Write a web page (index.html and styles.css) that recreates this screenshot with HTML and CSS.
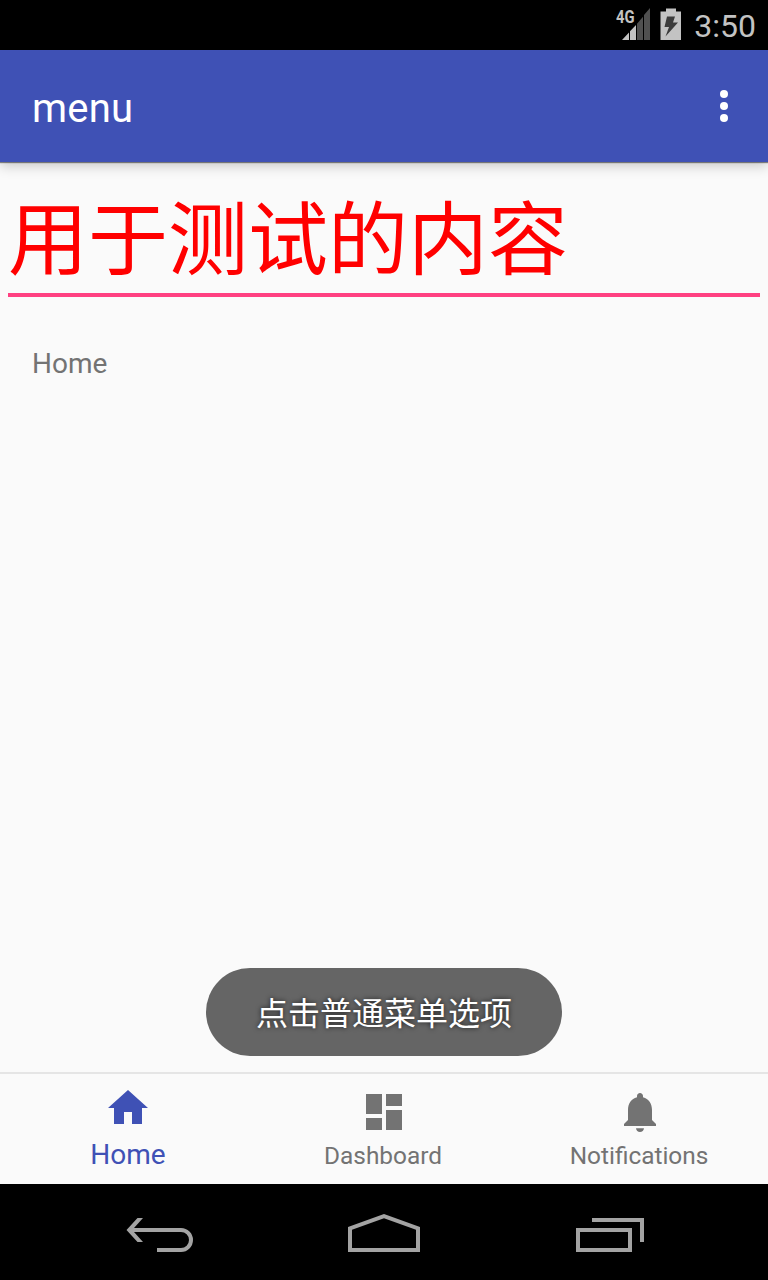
FILE: index.html
```html
<!DOCTYPE html>
<html lang="zh-CN">
<head>
<meta charset="utf-8">
<title>menu</title>
<link rel="stylesheet" href="styles.css">
</head>
<body>
<div class="screen">
  <div class="status-bar">
    <div class="signal">
      <svg width="36" height="34" viewBox="0 0 36 34">
        <path fill="#c3c3c3" d="M7 33L14 25.500V33ZM15 24.200L21 18V33H15Z"/>
        <path fill="#505050" d="M22 16.700L28 9.800V33H22ZM29 8L35 1V33H29Z"/>
      </svg>
      <span class="network">4G</span>
    </div>
    <svg class="battery" width="22" height="34" viewBox="0 0 22 34">
      <path fill="#c3c3c3" d="M6 1.500H16V4.500H21V33H.5V4.500H6Z"/>
      <path fill="#3c3c3c" d="M7 9.500H15L13 15.500H18L5.500 29.500L9 20H4.500Z"/>
    </svg>
    <span class="clock">3:50</span>
  </div>
  <header class="app-bar">
    <h1 class="title">menu</h1>
    <svg class="overflow" width="8" height="32" viewBox="0 0 8 32" fill="#fff">
      <circle cx="4" cy="4" r="4"/><circle cx="4" cy="16" r="4"/><circle cx="4" cy="28" r="4"/>
    </svg>
  </header>
  <main class="content">
    <div class="field">用于测试的内容</div>
    <p class="message">Home</p>
    <div class="toast">点击普通菜单选项</div>
  </main>
  <nav class="tabs">
    <div class="tab selected">
      <svg width="48" height="48" viewBox="0 0 24 24"><path d="M10 20v-6h4v6h5v-8h3L12 3 2 12h3v8z"/></svg>
      <span class="label">Home</span>
    </div>
    <div class="tab">
      <svg width="48" height="48" viewBox="0 0 24 24"><path d="M3 13h8V3H3v10zm0 8h8v-6H3v6zm10 0h8V11h-8v10zm0-18v6h8V3h-8z"/></svg>
      <span class="label">Dashboard</span>
    </div>
    <div class="tab">
      <svg width="48" height="48" viewBox="0 0 24 24"><path d="M10 20.100h4c-.1 1.200-.9 1.900-2 1.900s-1.900-.7-2-1.900zM18 16v-5c0-3.070-1.640-5.640-4.500-6.320V4c0-.83-.67-1.500-1.500-1.500s-1.500.67-1.500 1.500v.68C7.630 5.360 6 7.920 6 11v5l-2 2v1h16v-1l-2-2z"/></svg>
      <span class="label">Notifications</span>
    </div>
  </nav>
  <div class="system-nav">
    <svg width="88" height="48" viewBox="0 0 88 48"><path d="M25.500 10H31L22 20H69A12 12 0 0 1 69 44H45V40H69A8 8 0 0 0 69 24H22L31 34H25.500L14.500 22Z"/></svg>
    <svg width="80" height="48" viewBox="0 0 80 48"><path d="M4 19L40 6L76 19V44H4ZM8 21.800V40H72V21.800L40 10.200Z" fill-rule="evenodd"/></svg>
    <svg width="80" height="48" viewBox="-2 0 80 48"><path d="M22 10H74V34H70V14H22ZM6 20H62V44H6ZM10 24V40H58V24Z" fill-rule="evenodd"/></svg>
  </div>
</div>
</body>
</html>
```
FILE: styles.css
```css
body {
  margin: 0;
  font-family: Roboto, "Noto Sans CJK SC", sans-serif;
}

.screen {
  display: flex;
  flex-direction: column;
  width: 768px;
  height: 1280px;
  overflow: hidden;
  background: #fafafa;
}

.status-bar {
  display: flex;
  align-items: center;
  justify-content: flex-end;
  flex: 0 0 50px;
  height: 50px;
  padding-right: 12px;
  box-sizing: border-box;
  background: #000;
  color: #c3c3c3;
}

.signal {
  position: relative;
  height: 36px;
  margin-right: 9px;
}

.signal svg,
.battery {
  display: block;
}

.network {
  position: absolute;
  left: 1px;
  top: 0;
  font-size: 18px;
  font-weight: 700;
  line-height: 20px;
  transform: scaleX(0.82);
  transform-origin: left;
}

.battery {
  margin: 0 12px 2px 0;
}

.clock {
  font-size: 32px;
  line-height: 44px;
  padding-top: 2px;
}

.app-bar {
  display: flex;
  align-items: center;
  justify-content: space-between;
  flex: 0 0 112px;
  padding: 0 40px 0 32px;
  box-sizing: border-box;
  background: #3f51b5;
  color: #fff;
  z-index: 1;
  box-shadow: 0 1px 1px rgba(0, 0, 0, 0.45), 0 4px 12px rgba(0, 0, 0, 0.2);
}

.title {
  margin: 0;
  padding-top: 4px;
  font-size: 40px;
  font-weight: 400;
  letter-spacing: 0.2px;
}

.content {
  position: relative;
  flex: 1;
  padding: 0 8px;
}

.field {
  height: 131px;
  border-bottom: 4px solid #ff4081;
  font-size: 80px;
  line-height: 158px;
  color: #f00;
}

.message {
  margin: 50px 24px 0;
  font-size: 28px;
  line-height: 33px;
  color: #737373;
}

.toast {
  position: absolute;
  left: 206px;
  bottom: 16px;
  width: 356px;
  height: 88px;
  border-radius: 44px;
  background: #656565;
  color: #fff;
  font-size: 32px;
  line-height: 92px;
  text-align: center;
  text-shadow: 0 0 5px rgba(0, 0, 0, 0.75);
}

.tabs {
  display: flex;
  flex: 0 0 112px;
  box-sizing: border-box;
  border-top: 2px solid #e5e5e5;
}

.tab {
  display: flex;
  flex: 1;
  flex-direction: column;
  align-items: center;
  padding-top: 14px;
  color: #737373;
  fill: #737373;
}

.tab.selected {
  padding-top: 10px;
  color: #3f51b5;
  fill: #3f51b5;
}

.label {
  font-size: 24.400px;
  line-height: 28px;
  padding: 6px 2px 0 0;
}

.selected .label {
  padding-right: 0;
  font-size: 28px;
  line-height: 33px;
}

.system-nav {
  display: flex;
  align-items: center;
  justify-content: space-between;
  flex: 0 0 96px;
  box-sizing: border-box;
  padding: 0 120px 0 112px;
  background: #000;
  fill: #a3a3a3;
}
```
